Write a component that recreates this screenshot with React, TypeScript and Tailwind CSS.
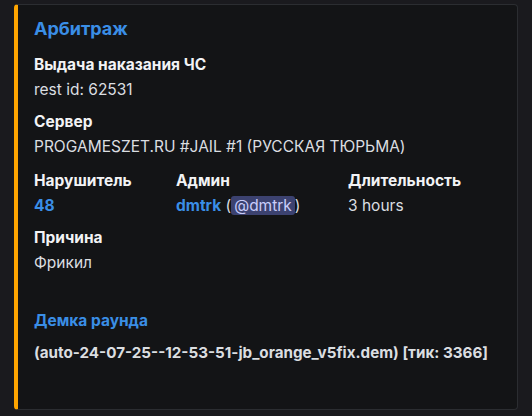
const FONT = { fontFamily: 'Inter, "Noto Sans", sans-serif' };

interface IField {
  name: string;
  value: React.ReactNode;
  width?: string;
}

function Field({ name, value, width = "" }: IField) {
  return (
    <div className={`flex flex-col ${width}`}>
      <div className="text-[15.5px] leading-[20px] font-bold text-[#f2f3f5]">{name}</div>
      <div className="mt-[3px] text-[15.5px] leading-[24px] text-[#dbdee1]">{value}</div>
    </div>
  );
}

export default function App() {
  return (
    <div className="w-[532px] h-[416px] bg-[#1a1a1e] pt-[4px] pl-[14px]" style={FONT}>
      <div className="w-[504px] h-[406px] bg-[#131416] rounded-[4px] border border-[#2b2d31] border-l-[4px] border-l-[#ffa500] pl-[16px] pt-[12px]">
        <div className="text-[18px] leading-[24px] font-bold text-[#3a8ee6]">Арбитраж</div>

        <div className="mt-[14px] flex flex-col">
          <Field name="Выдача наказания ЧС" value="rest id: 62531" />

          <div className="mt-[10px]">
            <Field name="Сервер" value="PROGAMESZET.RU #JAIL #1 (РУССКАЯ ТЮРЬМА)" />
          </div>

          <div className="mt-[12px] flex">
            <Field
              name="Нарушитель"
              width="w-[142px]"
              value={<span className="font-bold text-[#3a8ee6]">48</span>}
            />
            <Field
              name="Админ"
              width="w-[172px]"
              value={
                <span>
                  <span className="font-bold text-[#3a8ee6]">dmtrk</span> (
                  <span className="rounded-[3px] bg-[#3c4270] px-[3px] text-[#c9cdfb]">@dmtrk</span>)
                </span>
              }
            />
            <Field name="Длительность" value="3 hours" />
          </div>

          <div className="mt-[10px]">
            <Field name="Причина" value="Фрикил" />
          </div>

          <div className="mt-[36px] flex flex-col">
            <div className="text-[15.5px] leading-[20px] font-bold text-[#3a8ee6]">Демка раунда</div>
            <div className="mt-[10px] text-[15.2px] leading-[24px] font-bold text-[#dbdee1]">
              (auto-24-07-25--12-53-51-jb_orange_v5fix.dem) [тик: 3366]
            </div>
          </div>
        </div>
      </div>
    </div>
  );
}
